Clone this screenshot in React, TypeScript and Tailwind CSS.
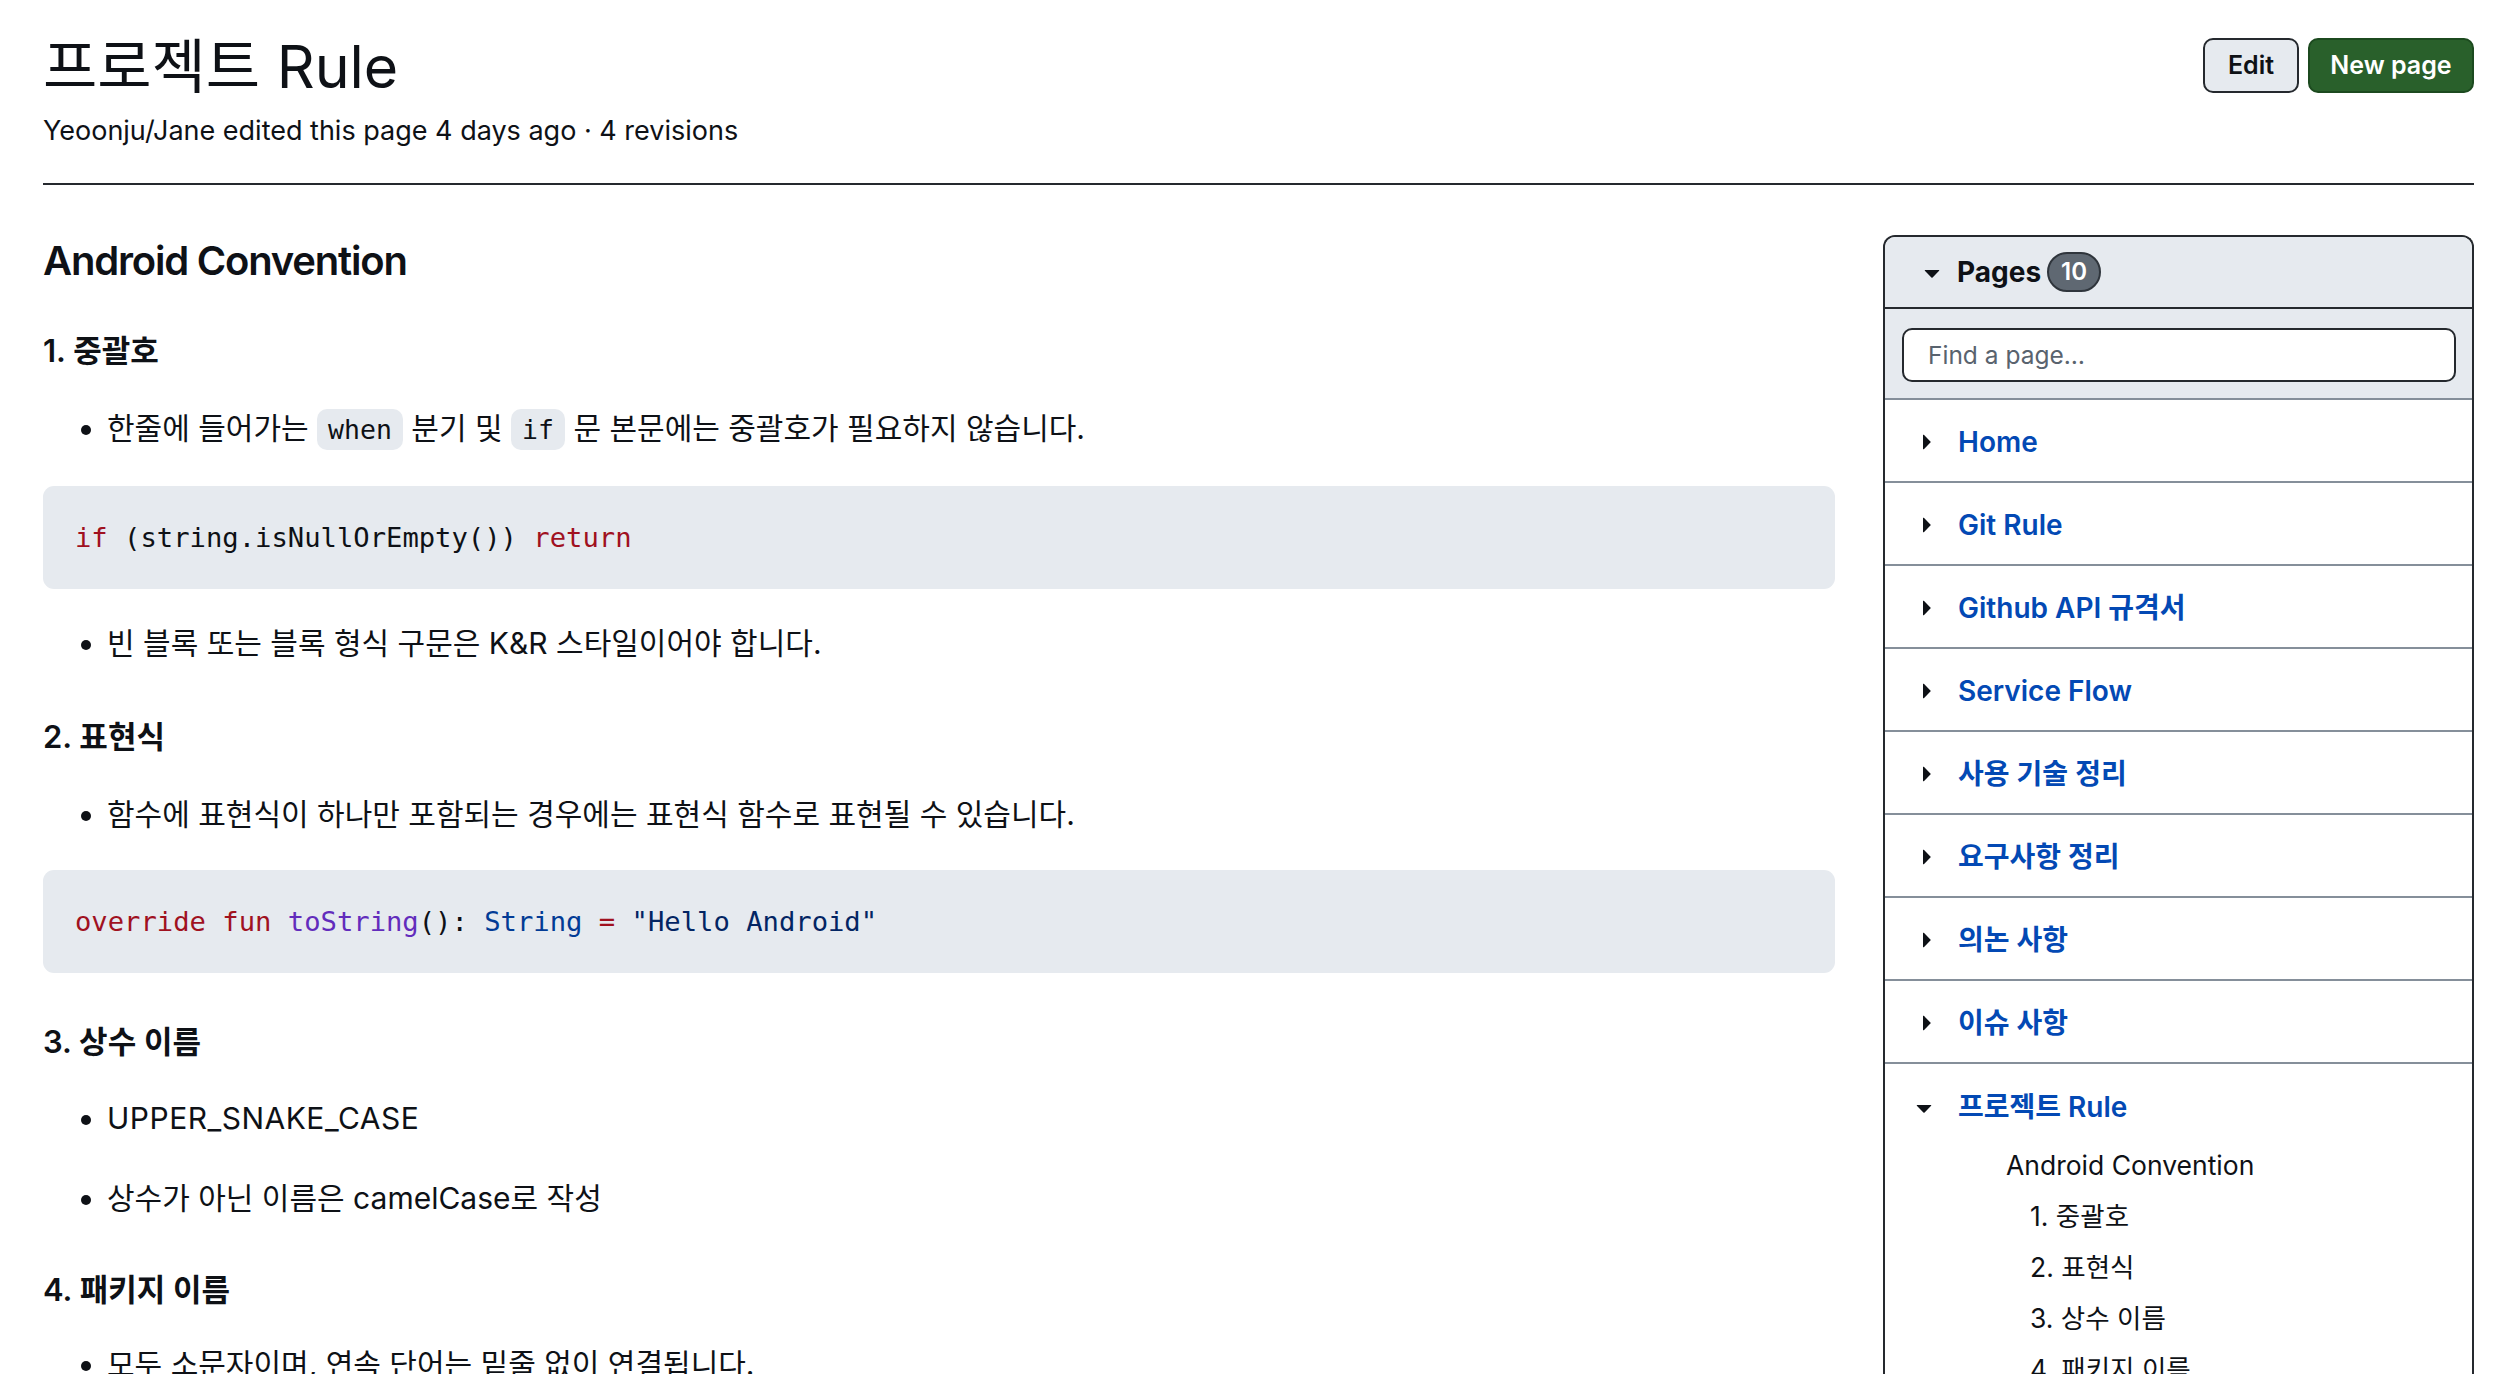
import React from 'react';

const sans = 'font-[Inter,"Noto_Sans_CJK_KR",sans-serif]';
const mono = 'font-["DejaVu_Sans_Mono","Liberation_Mono",monospace]';

const TriangleRight = () => (
  <svg width="32" height="32" viewBox="0 0 16 16" fill="currentColor" className="shrink-0">
    <path d="m6.427 4.427 3.396 3.396a.25.25 0 0 1 0 .354l-3.396 3.396A.25.25 0 0 1 6 11.396V4.604a.25.25 0 0 1 .427-.177Z" />
  </svg>
);

const TriangleDown = () => (
  <svg width="32" height="32" viewBox="0 0 16 16" fill="currentColor" className="shrink-0">
    <path d="m4.427 7.427 3.396 3.396a.25.25 0 0 0 .354 0l3.396-3.396A.25.25 0 0 0 11.396 7H4.604a.25.25 0 0 0-.177.427Z" />
  </svg>
);

const Code = ({ children }: { children: React.ReactNode }) => (
  <span className={`${mono} text-[26.5px] bg-[#e6eaef] rounded-[10px] px-[11px] py-[5px]`}>{children}</span>
);

const Bullet = ({ children, className = '' }: { children: React.ReactNode; className?: string }) => (
  <ul className={`list-disc pl-[64px] ${className}`}>
    <li className="text-[30px] leading-[42px]">{children}</li>
  </ul>
);

const H3 = ({ children, className = '' }: { children: React.ReactNode; className?: string }) => (
  <h3 className={`text-[31px] leading-[44px] font-semibold ${className}`}>{children}</h3>
);

const pages = ['Home', 'Git Rule', 'Github API 규격서', 'Service Flow', '사용 기술 정리', '요구사항 정리', '의논 사항', '이슈 사항'];
const toc = ['1. 중괄호', '2. 표현식', '3. 상수 이름', '4. 패키지 이름'];

export default function App() {
  return (
    <div className={`min-h-screen bg-white text-[#0e1116] ${sans}`}>
      <div className="pl-[43px] pr-[28px] pt-[32px]">
        <div className="flex justify-between items-start">
          <div>
            <h1 className="text-[59px] leading-[70px] font-normal">프로젝트 Rule</h1>
            <div className="text-[27px] leading-[36px] mt-[11px]">Yeoonju/Jane edited this page 4 days ago · 4 revisions</div>
          </div>
          <div className="flex gap-[9px] mt-[6px]">
            <button className="h-[55px] w-[96px] rounded-[10px] border-2 border-[#25292e] bg-[#e6eaef] text-[25px] font-semibold">Edit</button>
            <button className="h-[55px] w-[166px] rounded-[10px] border-2 border-[#1c4a1f] bg-[#29602b] text-white text-[25px] font-semibold">New page</button>
          </div>
        </div>
        <div className="mt-[34px] border-t-2 border-[#25292e]" />

        <div className="flex gap-[48px] pt-[50px]">
          <div className="flex-1 min-w-0">
            <h2 className="text-[40px] leading-[52px] font-semibold tracking-[-1.2px]">Android Convention</h2>

            <H3 className="mt-[42px]">1. 중괄호</H3>
            <Bullet className="mt-[34px]">
              한줄에 들어가는 <Code>when</Code> 분기 및 <Code>if</Code> 문 본문에는 중괄호가 필요하지 않습니다.
            </Bullet>
            <pre className={`${mono} mt-[35px] bg-[#e6eaef] rounded-[11px] px-[32px] py-[32px] text-[27.2px] leading-[39px]`}>
              <span className="text-[#a0111f]">if</span> (string.isNullOrEmpty()) <span className="text-[#a0111f]">return</span>
            </pre>
            <Bullet className="mt-[33px]">빈 블록 또는 블록 형식 구문은 K&amp;R 스타일이어야 합니다.</Bullet>

            <H3 className="mt-[51px]">2. 표현식</H3>
            <Bullet className="mt-[34px]">함수에 표현식이 하나만 포함되는 경우에는 표현식 함수로 표현될 수 있습니다.</Bullet>
            <pre className={`${mono} mt-[35px] bg-[#e6eaef] rounded-[11px] px-[32px] py-[32px] text-[27.2px] leading-[39px]`}>
              <span className="text-[#a0111f]">override fun</span> <span className="text-[#622cbc]">toString</span>(): <span className="text-[#023b95]">String</span> <span className="text-[#a0111f]">=</span> <span className="text-[#032563]">"Hello Android"</span>
            </pre>

            <H3 className="mt-[47px]">3. 상수 이름</H3>
            <Bullet className="mt-[33px]"><span className="tracking-[0.5px]">UPPER_SNAKE_CASE</span></Bullet>
            <Bullet className="mt-[38px]">상수가 아닌 이름은 camelCase로 작성</Bullet>

            <H3 className="mt-[49px]">4. 패키지 이름</H3>
            <Bullet className="mt-[31px]">모두 소문자이며, 연속 단어는 밑줄 없이 연결됩니다.</Bullet>
          </div>

          <div className="w-[591px] shrink-0 border-2 border-b-0 border-[#25292e] rounded-t-[12px] overflow-hidden">
            <div className="h-[72px] bg-[#e6eaef] border-b-2 border-[#25292e] flex items-center pl-[31px]">
              <TriangleDown />
              <span className="ml-[9px] text-[28px] font-bold">Pages</span>
              <span className="ml-[6px] h-[40px] px-[12px] rounded-full bg-[#5f6872] border-2 border-[#2f353c] text-white text-[24px] font-semibold flex items-center">10</span>
            </div>
            <div className="bg-[#e6eaef] pt-[19px] pb-[16px] pl-[17px] pr-[16px] border-b-2 border-[#858f9a]">
              <input
                className="w-full h-[54px] rounded-[10px] border-2 border-[#25292e] bg-white pl-[24px] text-[24.5px] placeholder:text-[#59636e] outline-none"
                placeholder="Find a page…"
              />
            </div>
            {pages.map((p) => (
              <div key={p} className="h-[83px] border-b-2 border-[#858f9a] flex items-center pl-[26px] pt-[2px]">
                <TriangleRight />
                <span className="ml-[15px] text-[28px] font-semibold text-[#0349b4]">{p}</span>
              </div>
            ))}
            <div className="pt-[22px] pb-[20px]">
              <div className="flex items-center pl-[23px] h-[42px]">
                <TriangleDown />
                <span className="ml-[18px] text-[28px] font-semibold text-[#0349b4]">프로젝트 Rule</span>
              </div>
              <div className="mt-[12px]">
                <div className="pl-[121px] text-[26.5px] leading-[51px]">Android Convention</div>
                {toc.map((t) => (
                  <div key={t} className="pl-[145px] text-[26.5px] leading-[51px]">{t}</div>
                ))}
              </div>
            </div>
          </div>
        </div>
      </div>
    </div>
  );
}
